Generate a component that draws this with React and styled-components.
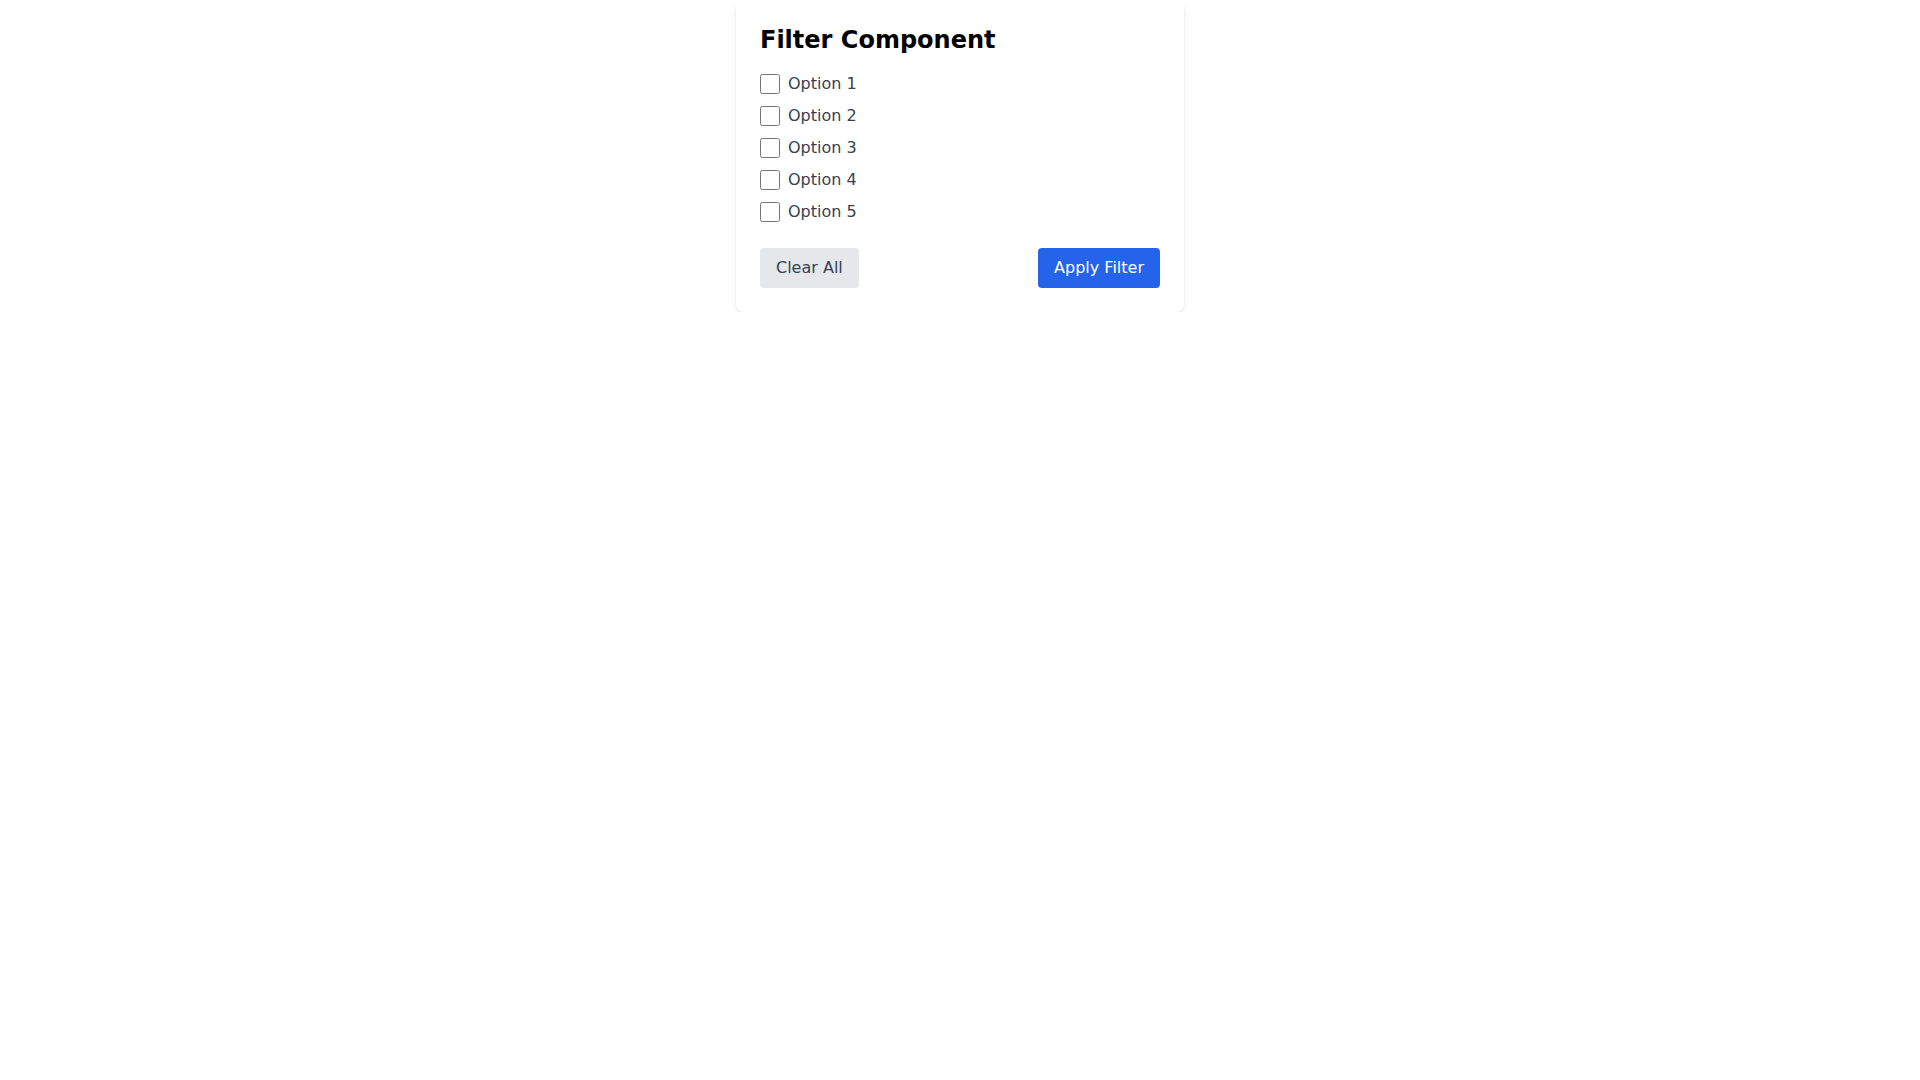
import styled, { createGlobalStyle } from "styled-components"

const GlobalStyle = createGlobalStyle`
    body {
        margin:0;
        background:#ffffff;
        font-family:"DejaVu Sans", sans-serif;
    }
`
const Card = styled.div`
    width:448px;
    box-sizing:border-box;
    margin:0 auto;
    padding:24px;
    background:#ffffff;
    border-radius:8px;
    box-shadow:0 4px 6px -1px rgba(0,0,0,0.1), 0 2px 4px -2px rgba(0,0,0,0.1);
`
const Title = styled.h2`
    margin:0 0 16px;
    font-size:24px;
    line-height:32px;
    font-weight:700;
    color:#000000;
`
const List = styled.div`
    display:flex;
    flex-direction:column;
    gap:8px;
`
const Row = styled.label`
    display:flex;
    align-items:center;
    height:24px;
    font-size:16px;
    line-height:24px;
    color:#374151;
    cursor:pointer;
`
const Box = styled.input`
    width:20px;
    height:20px;
    margin:0 8px 0 0;
`
const Footer = styled.div`
    display:flex;
    justify-content:space-between;
    margin-top:24px;
`
const Button = styled.button`
    border:none;
    padding:8px 16px;
    border-radius:4px;
    font-family:"DejaVu Sans", sans-serif;
    font-size:16px;
    line-height:24px;
    background:${p => p.$primary ? "#2563eb" : "#e5e7eb"};
    color:${p => p.$primary ? "#ffffff" : "#374151"};
    cursor:pointer;
`

const options = ["Option 1", "Option 2", "Option 3", "Option 4", "Option 5"]

const App = () => {
    return (
        <>
            <GlobalStyle />
            <Card>
                <Title>Filter Component</Title>
                <List>
                    {options.map(o => (
                        <Row key={o}>
                            <Box type="checkbox" />
                            {o}
                        </Row>
                    ))}
                </List>
                <Footer>
                    <Button>Clear All</Button>
                    <Button $primary>Apply Filter</Button>
                </Footer>
            </Card>
        </>
    )
}

export default App
